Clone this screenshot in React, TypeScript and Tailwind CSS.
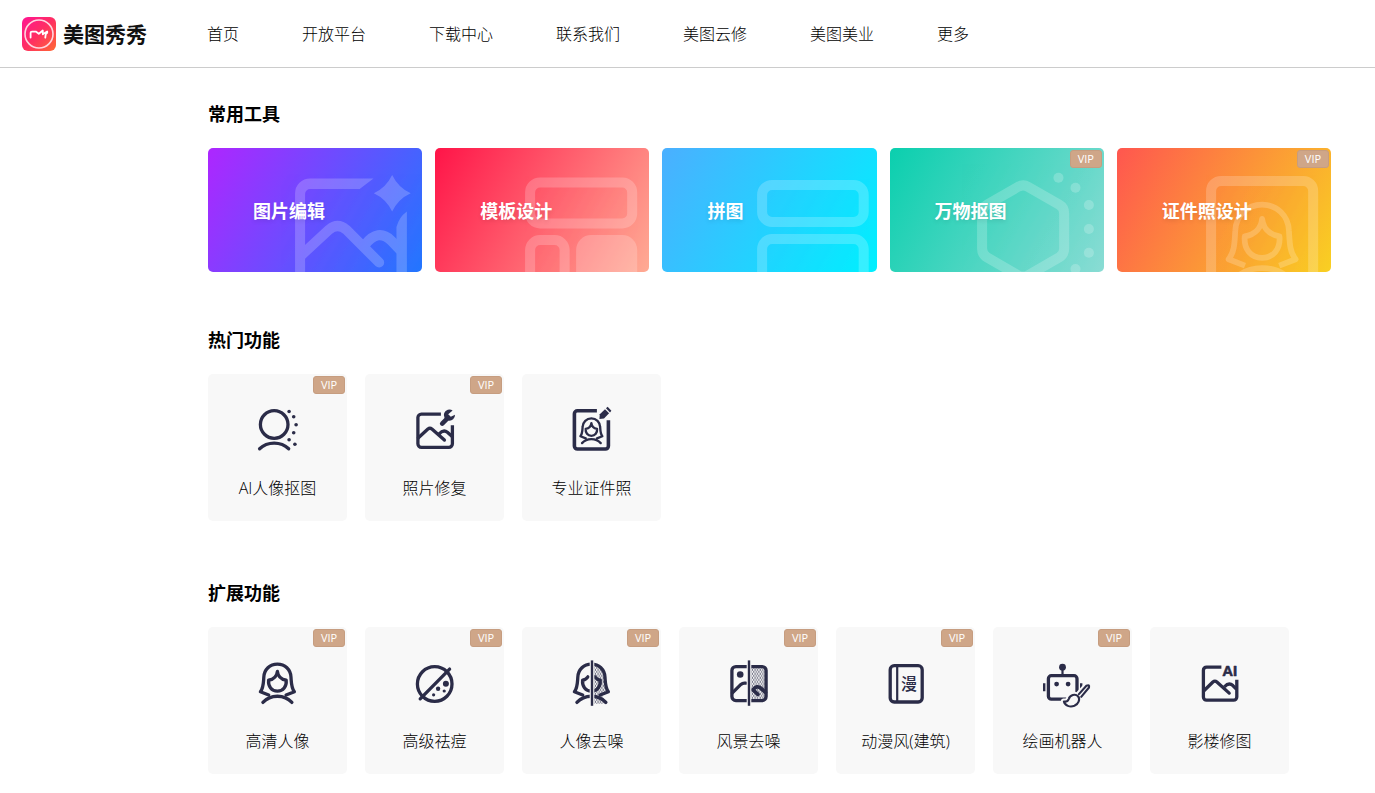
import type { ReactNode } from "react";

const NAV = ["首页", "开放平台", "下载中心", "联系我们", "美图云修", "美图美业", "更多"];

const INK = "#2b2c48";

const HAIR =
  "M15.3 36.2 L7 33 C10.2 29 10 24 10.4 18.5 C10.7 10.8 16.5 5.3 24 5.3 C31.5 5.3 37.3 10.8 37.6 18.5 C38 24 37.8 29 41 33 L32.7 36.2";
const FACE =
  "M24 12.5 C23.6 16.5 21 20.4 15.2 21.4 C14.6 27.6 18.2 32.3 24 32.3 C29.8 32.3 33.4 27.6 32.8 21.4 C27 20.4 24.4 16.5 24 12.5Z";
const BODY = "M9.5 43.6 C17 35.4 31 35.4 38.5 43.6";

function Woman() {
  return (
    <>
      <path d={HAIR} />
      <path d={FACE} />
      <path d={BODY} />
    </>
  );
}

function Icon({ children }: { children: ReactNode }) {
  return (
    <svg
      className="size-12 overflow-visible"
      viewBox="0.6 0.2 48 48"
      fill="none"
      stroke={INK}
      strokeWidth="3.3"
      strokeLinecap="round"
      strokeLinejoin="round"
      aria-hidden="true"
    >
      {children}
    </svg>
  );
}

function Dots({ points }: { points: number[][] }) {
  return (
    <g fill={INK} stroke="none">
      {points.map(([x, y, r]) => (
        <circle key={`${x}-${y}`} cx={x} cy={y} r={r} />
      ))}
    </g>
  );
}

const CutoutIcon = (
  <Icon>
    <circle cx="20.8" cy="18.7" r="13.8" />
    <path d="M6.2 43 C14 35.4 27.5 35.4 35.3 43" />
    <Dots
      points={[
        [35.7, 5.7, 1.8],
        [40.3, 11, 1.8],
        [42.7, 19, 1.8],
        [40.3, 27, 1.8],
        [35.7, 34, 1.8],
        [41.5, 38.5, 1.8],
      ]}
    />
  </Icon>
);

const RepairIcon = (
  <Icon>
    <path
      d="M30.5 8.3 H11 a3.5 3.5 0 0 0 -3.5 3.5 V38 a3.5 3.5 0 0 0 3.5 3.5 H38.5 a3.5 3.5 0 0 0 3.5 -3.5 V19.5"
      strokeLinecap="butt"
    />
    <path d="M8 32 L17.5 23.2 Q19.5 21.6 21.5 23.2 L34 34.3" />
    <path d="M28.5 28.3 Q33 23.3 37 26.5 L42 31" strokeLinecap="butt" />
    <path d="M31.8 17.8 L37.5 12" strokeWidth="4.6" />
    <path
      d="M42.2 4.7 A5.6 5.6 0 1 0 44.6 9 L40.4 11 L37.8 8.5 Z"
      fill={INK}
      stroke="none"
    />
  </Icon>
);

const IdPhotoIcon = (
  <Icon>
    <path
      d="M29.5 5 H10 a3 3 0 0 0 -3 3 V40.2 a3 3 0 0 0 3 3 H38 a3 3 0 0 0 3 -3 V14.5"
      strokeLinecap="butt"
      strokeWidth="3.6"
    />
    <g transform="translate(8.5 9.2) scale(.645)" strokeWidth="3.6">
      <Woman />
    </g>
    <path d="M32 13.2 L32.4 8.4 L37.6 3.4 L41.7 7.5 L36.6 12.8Z" fill={INK} stroke="none" />
    <path d="M38.6 2.5 L40.2 1 L44 4.9 L42.6 6.6Z" fill={INK} stroke="none" />
  </Icon>
);

const PortraitIcon = (
  <Icon>
    <Woman />
  </Icon>
);

const AcneIcon = (
  <Icon>
    <circle cx="24.3" cy="25.2" r="17.3" />
    <path d="M9.8 40 L39.2 10.3" />
    <Dots
      points={[
        [35.5, 25, 3],
        [27.7, 30, 2.2],
        [33.8, 32.2, 1.6],
        [23.2, 36, 1.6],
      ]}
    />
  </Icon>
);

function Noise({ id, d }: { id: string; d: string }) {
  return (
    <>
      <pattern id={id} width="2.6" height="4" patternUnits="userSpaceOnUse">
        <circle cx=".7" cy="1" r=".75" fill={INK} stroke="none" />
        <circle cx="2" cy="3" r=".75" fill={INK} stroke="none" />
      </pattern>
      <path d={d} fill={`url(#${id})`} stroke="none" />
    </>
  );
}

const PortraitDenoiseIcon = (
  <Icon>
    <Noise id="noise-portrait" d="M25 6 C33 6 37 12 37.3 19 C37.6 26 38 30 39 33 L35 37 L38 45 H25Z" />
    <path d={HAIR} />
    <path d="M20.5 18 Q18.5 21 15.2 21.4 C14.6 27.6 18.2 32.3 24 32.3 C29.8 32.3 33.4 27.6 32.8 21.4 Q29.5 21 27.5 18" />
    <path d={BODY} />
    <path d="M24.6 2 V46.5" stroke="#f8f8f8" strokeWidth="4.6" />
    <path d="M24.6 1.6 V47" strokeWidth="2.4" strokeLinecap="butt" />
  </Icon>
);

const LandscapeDenoiseIcon = (
  <Icon>
    <Noise id="noise-landscape" d="M25 8 H41 V41 H25Z" />
    <rect x="7.5" y="7.8" width="34.2" height="34" rx="4" />
    <circle cx="15.8" cy="15.7" r="3.3" fill={INK} stroke="none" />
    <path d="M8 34 L16.5 25.6 Q18.5 23.8 21.5 24.4" />
    <path d="M33.5 35.5 L28.5 31 Q32.5 26 36.5 29.5 L41 33.5" strokeWidth="3.8" />
    <path d="M24.6 2 V46.5" stroke="#f8f8f8" strokeWidth="4.6" />
    <path d="M24.6 1.6 V47" strokeWidth="2.4" strokeLinecap="butt" />
  </Icon>
);

const ComicIcon = (
  <Icon>
    <rect x="8.8" y="6.9" width="32" height="36.3" rx="4" />
    <path d="M15.8 7 V43" strokeWidth="2.2" />
    <text
      x="27.5"
      y="31"
      textAnchor="middle"
      fill={INK}
      stroke="none"
      className="font-['Noto_Sans_CJK_SC',sans-serif] text-[16px] font-medium"
    >
      漫
    </text>
  </Icon>
);

const RobotIcon = (
  <Icon>
    <rect x="10" y="16.9" width="28.6" height="23.5" rx="3" />
    <path d="M24.1 9 V16" strokeWidth="2.2" />
    <path d="M5.8 24.5 V32.5 M42.8 24.5 V32.5" strokeWidth="2.4" strokeLinecap="butt" />
    <Dots
      points={[
        [24.1, 8.4, 3.4],
        [18.2, 25.3, 2.4],
        [29.7, 25.3, 2.4],
      ]}
    />
    <g stroke="#f8f8f8" strokeWidth="6">
      <path d="M25.5 42.7 Q29 43.4 30.3 40.3 C31.5 36 37 34.6 39.8 37.7 C42 40.5 40 45.3 36 47 C31.5 48.6 26.5 47 25.5 42.7Z" />
      <path d="M40.5 35.3 L48 27 Q50.5 25.6 50.3 28.7 L42.8 37.6" />
    </g>
    <g strokeWidth="2.1">
      <path
        d="M25.5 42.7 Q29 43.4 30.3 40.3 C31.5 36 37 34.6 39.8 37.7 C42 40.5 40 45.3 36 47 C31.5 48.6 26.5 47 25.5 42.7Z"
        fill="#f8f8f8"
      />
      <path d="M40.5 35.3 L48 27 Q51.4 25.4 50.6 28.7 L42.8 38" fill="#f8f8f8" />
    </g>
  </Icon>
);

const StudioIcon = (
  <Icon>
    <path
      d="M26 8.3 H11.2 a3.2 3.2 0 0 0 -3.2 3.2 V38.2 a3.2 3.2 0 0 0 3.2 3.2 H38.2 a3.2 3.2 0 0 0 3.2 -3.2 V21"
      strokeLinecap="butt"
    />
    <path d="M8.5 32 L17.5 23.2 Q19.5 21.4 21.5 23.2 L33.8 34.3" />
    <path d="M29 28 Q33.5 23.2 37.5 26.8 L41 30.4" strokeLinecap="butt" />
    <text
      x="26.8"
      y="17.2"
      fill={INK}
      stroke={INK}
      strokeWidth=".6"
      className="font-['Liberation_Sans',sans-serif] text-[15px] font-bold"
    >
      AI
    </text>
  </Icon>
);

const EditArt = (
  <>
    <path d="M165.3 30.5 H102 a15 15 0 0 0 -15 15 V124 H97 V46 a5 5 0 0 1 5 -5 H151.5Z" fill="#fff" stroke="none" />
    <path d="M198.7 63.5 Q191 69 188.3 79 V124 H198.7Z" fill="#fff" stroke="none" />
    <path
      d="M184 27 Q190 39.5 202.5 45.3 Q190 51 184 63.6 Q178 51 165.7 45.3 Q178 39.5 184 27Z"
      fill="#fff"
      stroke="none"
    />
    <path d="M93 107.5 L121 81.5 Q129.5 74.5 138 81.5 L171 114.5" strokeLinecap="round" />
    <path d="M157 96.5 Q170 80 183 92.5 L192 102" />
  </>
);

const TemplateArt = (
  <>
    <rect x="95" y="34.5" width="102" height="41" rx="10" />
    <rect x="95" y="92" width="34.5" height="60" rx="10" />
    <rect x="141" y="87" width="61" height="70" rx="15" fill="#fff" stroke="none" />
  </>
);

const CollageArt = (
  <>
    <rect x="100" y="37" width="101.5" height="37" rx="10" />
    <rect x="100" y="91" width="101.5" height="60" rx="10" />
  </>
);

const ObjectArt = (
  <>
    <path d="M128 38.8 Q133 36 138 38.8 L169 56.7 Q174 59.5 174 65.5 V100.5 Q174 106.5 169 109.3 L138 127.2 Q133 130 128 127.2 L97 109.3 Q92 106.5 92 100.5 V65.5 Q92 59.5 97 56.7Z" />
    <g fill="#fff" stroke="none">
      <circle cx="168.3" cy="29.7" r="5" />
      <circle cx="185.3" cy="39.7" r="5" />
      <circle cx="198.7" cy="57" r="5" />
      <circle cx="198.7" cy="81" r="5" />
      <circle cx="198.7" cy="104.7" r="5" />
      <circle cx="185.3" cy="121" r="5" />
    </g>
  </>
);

const IdArt = (
  <>
    <rect x="94" y="33" width="102" height="120" rx="10" />
    <g transform="translate(97.7 46.2) scale(1.97)" strokeWidth="2.9" strokeLinejoin="round">
      <Woman />
    </g>
  </>
);

const TOOLS: { name: string; color: string; art: ReactNode; vip?: boolean }[] = [
  { name: "图片编辑", color: "bg-[linear-gradient(120deg,#ae26ff,#2277ff)]", art: EditArt },
  { name: "模板设计", color: "bg-[linear-gradient(120deg,#ff1448,#ffab94)]", art: TemplateArt },
  { name: "拼图", color: "bg-[linear-gradient(120deg,#4bafff,#00f0ff)]", art: CollageArt },
  { name: "万物抠图", color: "bg-[linear-gradient(120deg,#0acfae,#8adcd4)]", art: ObjectArt, vip: true },
  { name: "证件照设计", color: "bg-[linear-gradient(120deg,#ff564f,#f9d022)]", art: IdArt, vip: true },
];

type Feature = { name: string; icon: ReactNode; vip?: boolean };

const HOT: Feature[] = [
  { name: "AI人像抠图", icon: CutoutIcon, vip: true },
  { name: "照片修复", icon: RepairIcon, vip: true },
  { name: "专业证件照", icon: IdPhotoIcon },
];

const EXTENDED: Feature[] = [
  { name: "高清人像", icon: PortraitIcon, vip: true },
  { name: "高级祛痘", icon: AcneIcon, vip: true },
  { name: "人像去噪", icon: PortraitDenoiseIcon, vip: true },
  { name: "风景去噪", icon: LandscapeDenoiseIcon, vip: true },
  { name: "动漫风(建筑)", icon: ComicIcon, vip: true },
  { name: "绘画机器人", icon: RobotIcon, vip: true },
  { name: "影楼修图", icon: StudioIcon },
];

function Vip() {
  return (
    <span className="absolute top-0.5 right-0.5 h-[18px] w-8 rounded-[3px] border border-[#c69d80] bg-[#cfa688] text-center text-[11px] leading-4 font-medium text-white">
      VIP
    </span>
  );
}

function Heading({ children }: { children: ReactNode }) {
  return <h2 className="mb-5 text-lg leading-7 font-bold text-black">{children}</h2>;
}

function FeatureList({ items }: { items: Feature[] }) {
  return (
    <ul className="flex flex-wrap gap-[18px]">
      {items.map((item) => (
        <li key={item.name}>
          <a
            href="#"
            className="relative flex w-[139px] flex-col items-center rounded-[5px] bg-[#f8f8f8] pt-8 pb-[21px]"
          >
            {item.icon}
            <span className="mt-[22px] text-base leading-6 font-light text-black">{item.name}</span>
            {item.vip && <Vip />}
          </a>
        </li>
      ))}
    </ul>
  );
}

function Logo() {
  return (
    <a href="#" className="flex w-[185px] shrink-0 items-center gap-[7px]">
      <svg className="size-[34px]" viewBox="0 0 34 34" fill="none" aria-hidden="true">
        <defs>
          <linearGradient id="logo" x1="0" y1="0" x2="1" y2="1">
            <stop offset="0" stopColor="#ff1493" />
            <stop offset=".5" stopColor="#ff2f62" />
            <stop offset="1" stopColor="#ff6a34" />
          </linearGradient>
        </defs>
        <rect width="34" height="34" rx="6" fill="url(#logo)" />
        <circle cx="17" cy="17" r="14" stroke="#ffd5df" strokeWidth="1.6" />
        <path
          d="M8.6 20.6 V15.8 Q8.6 14.6 10 14.6 H13.8 L16.8 16.8 L20.8 13.5 V17.3 L25.2 14.5 V15.9 Q23.6 16.3 23.3 20.6"
          stroke="#fff"
          strokeWidth="1.8"
          strokeLinecap="round"
          strokeLinejoin="round"
        />
      </svg>
      <span className="text-[21px] leading-8 font-bold text-[#111]">美图秀秀</span>
    </a>
  );
}

export default function App() {
  return (
    <div className="min-h-screen bg-white font-['Open_Sans','Noto_Sans_CJK_SC',sans-serif]">
      <header className="flex h-[68px] items-center border-b border-[#ccc] pl-[22px]">
        <Logo />
        <nav className="flex gap-x-[63px] text-base leading-6 font-light text-black">
          {NAV.map((label) => (
            <a key={label} href="#">
              {label}
            </a>
          ))}
        </nav>
      </header>

      <main className="pt-8 pr-11 pl-52">
        <section>
          <Heading>常用工具</Heading>
          <ul className="grid grid-cols-5 gap-[13px]">
            {TOOLS.map((tool) => (
              <li key={tool.name}>
                <a
                  href="#"
                  className={`relative flex h-[124px] items-center overflow-hidden rounded-[5px] pt-0.5 pl-[45px] ${tool.color}`}
                >
                  <svg
                    className="absolute inset-0 size-full"
                    viewBox="0 0 214 124"
                    preserveAspectRatio="xMaxYMid slice"
                    fill="none"
                    stroke="#fff"
                    strokeWidth="10"
                    opacity=".2"
                    aria-hidden="true"
                  >
                    {tool.art}
                  </svg>
                  <span className="relative text-lg leading-7 font-bold text-white [text-shadow:0_2px_4px_rgba(0,0,0,0.1)]">
                    {tool.name}
                  </span>
                  {tool.vip && <Vip />}
                </a>
              </li>
            ))}
          </ul>
        </section>

        <section className="pt-[54px]">
          <Heading>热门功能</Heading>
          <FeatureList items={HOT} />
        </section>

        <section className="pt-[58px]">
          <Heading>扩展功能</Heading>
          <FeatureList items={EXTENDED} />
        </section>
      </main>
    </div>
  );
}
